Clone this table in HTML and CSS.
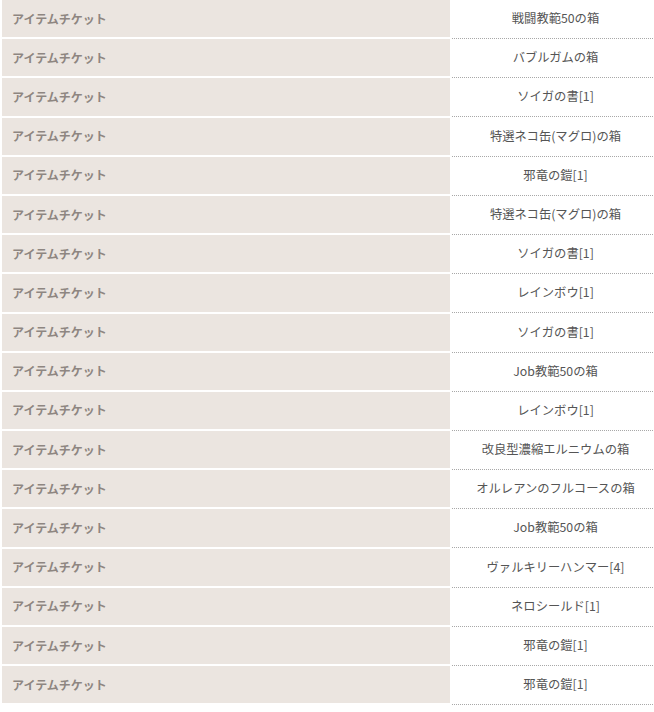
FILE: index.html
```html
<!DOCTYPE html>
<html lang="ja">
<head>
<meta charset="utf-8">
<link rel="stylesheet" href="styles.css">
</head>
<body>
<div class="list">
  <div class="row"><div class="name">アイテムチケット</div><div class="item">戦闘教範50の箱</div></div>
  <div class="row"><div class="name">アイテムチケット</div><div class="item">バブルガムの箱</div></div>
  <div class="row"><div class="name">アイテムチケット</div><div class="item">ソイガの書[1]</div></div>
  <div class="row"><div class="name">アイテムチケット</div><div class="item">特選ネコ缶(マグロ)の箱</div></div>
  <div class="row"><div class="name">アイテムチケット</div><div class="item">邪竜の鎧[1]</div></div>
  <div class="row"><div class="name">アイテムチケット</div><div class="item">特選ネコ缶(マグロ)の箱</div></div>
  <div class="row"><div class="name">アイテムチケット</div><div class="item">ソイガの書[1]</div></div>
  <div class="row"><div class="name">アイテムチケット</div><div class="item">レインボウ[1]</div></div>
  <div class="row"><div class="name">アイテムチケット</div><div class="item">ソイガの書[1]</div></div>
  <div class="row"><div class="name">アイテムチケット</div><div class="item">Job教範50の箱</div></div>
  <div class="row"><div class="name">アイテムチケット</div><div class="item">レインボウ[1]</div></div>
  <div class="row"><div class="name">アイテムチケット</div><div class="item">改良型濃縮エルニウムの箱</div></div>
  <div class="row"><div class="name">アイテムチケット</div><div class="item">オルレアンのフルコースの箱</div></div>
  <div class="row"><div class="name">アイテムチケット</div><div class="item">Job教範50の箱</div></div>
  <div class="row"><div class="name">アイテムチケット</div><div class="item">ヴァルキリーハンマー[4]</div></div>
  <div class="row"><div class="name">アイテムチケット</div><div class="item">ネロシールド[1]</div></div>
  <div class="row"><div class="name">アイテムチケット</div><div class="item">邪竜の鎧[1]</div></div>
  <div class="row"><div class="name">アイテムチケット</div><div class="item">邪竜の鎧[1]</div></div>
</div>
</body>
</html>
```
FILE: styles.css
```css
html, body {
  margin: 0;
  padding: 0;
  background: #ffffff;
}
body {
  font-family: "Noto Sans CJK JP", "Liberation Sans", sans-serif;
  overflow: hidden;
}
.list {
  display: flex;
  flex-direction: column;
  padding-left: 2px;
}
.row {
  display: flex;
  height: 39.2px;
  align-items: flex-start;
}
.name {
  width: 438px;
  height: 37.2px;
  padding-left: 10px;
  padding-bottom: 1px;
  box-sizing: content-box;
  background: #ebe5e0;
  color: #8e8681;
  font-size: 12px;
  font-weight: bold;
  display: flex;
  align-items: center;
}
.row .name {
  height: 36.2px;
}
.item {
  margin-left: 2px;
  width: 201px;
  height: 39px;
  box-sizing: border-box;
  border-bottom: 1px dotted #a8a8a8;
  color: #555555;
  font-size: 12.3px;
  display: flex;
  align-items: center;
  justify-content: center;
  padding-left: 6px;
  padding-bottom: 2px;
}
```
